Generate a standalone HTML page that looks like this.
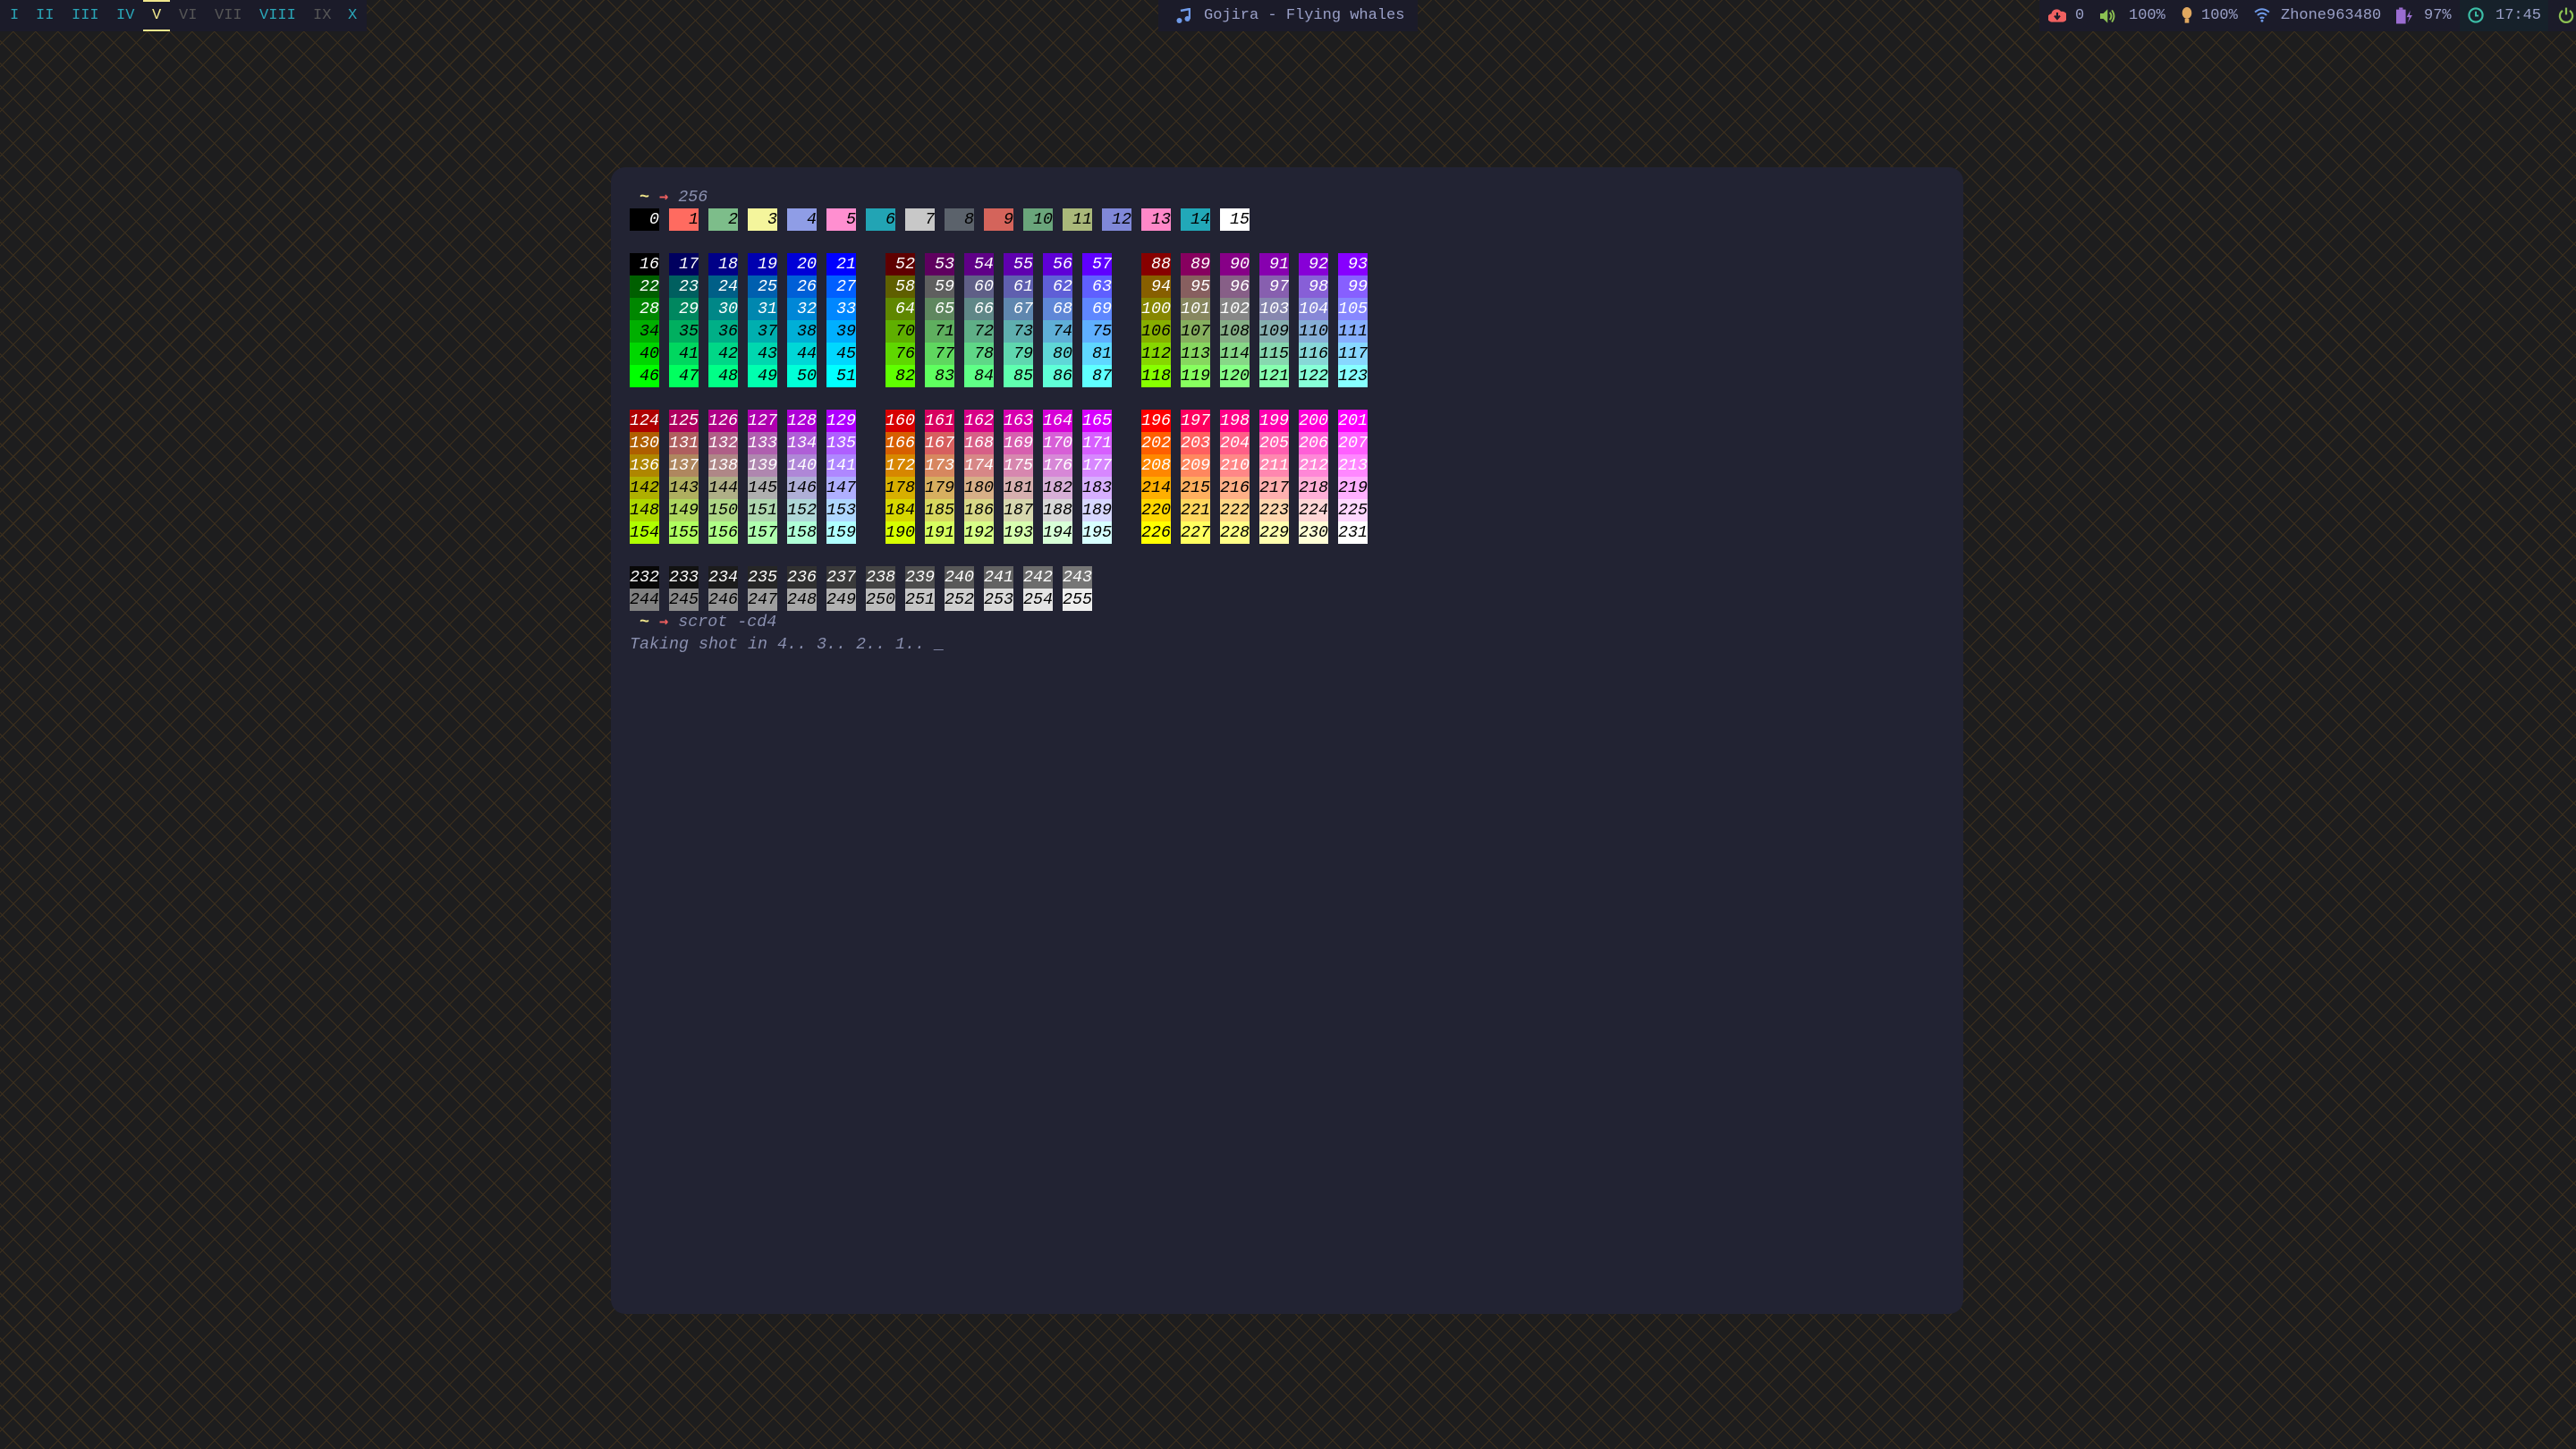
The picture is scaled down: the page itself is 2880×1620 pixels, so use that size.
<!DOCTYPE html>
<html><head><meta charset="utf-8"><style>
html,body{margin:0;padding:0}
body{width:2880px;height:1620px;overflow:hidden;position:relative;background-color:#1d1d1e;
background-image:repeating-linear-gradient(45deg,transparent 0 16.6px,#3b2f1d 16.6px 17.68px),repeating-linear-gradient(-45deg,transparent 0 16.6px,#3b2f1d 16.6px 17.68px);}
.bar{position:absolute;top:0;height:35px;background:#1b1b29;font-family:"Liberation Mono",monospace;font-size:17px;line-height:35px;color:#9aa0c8}
.bar span{position:absolute;top:0;white-space:pre}
.t{color:#2aa6b8}.d{color:#565656}
.win{position:absolute;left:683px;top:187px;width:1512px;height:1282px;background:#222333;border-radius:16px}
.term{position:absolute;left:704px;top:208px;font-family:"Liberation Mono",monospace;font-size:18.33px;line-height:25px;font-style:italic}
.l{display:flex;height:25px}
.p{display:block;height:25px;white-space:pre}
.l b{font-weight:normal;display:inline-block;width:33px;height:25px;text-align:right;margin-right:11px}
.l b.g{margin-left:22px}
.w b{color:#fff}.k b{color:#000}
.y{color:#f0e68c;font-weight:bold;font-style:normal}.r{color:#f06060;font-weight:bold;font-style:normal;font-family:"DejaVu Sans Mono",monospace;font-size:17px}.c{color:#8a90b0}
.ic{position:absolute;top:0}
</style></head><body>
<div class="bar" style="left:0;width:410px">
<span class="t" style="left:11px">I</span><span class="t" style="left:40px">II</span><span class="t" style="left:80px">III</span><span class="t" style="left:130px">IV</span><span style="left:170px;color:#f0e68c">V</span><span class="d" style="left:200px">VI</span><span class="d" style="left:240px">VII</span><span class="t" style="left:290px">VIII</span><span class="d" style="left:350px">IX</span><span class="t" style="left:389px">X</span>
<div style="position:absolute;left:160px;top:0;width:30px;height:2px;background:#f0e68c"></div>
<div style="position:absolute;left:160px;top:33px;width:30px;height:2px;background:#f0e68c"></div>
</div>
<div class="bar" style="left:1295px;width:290px">
<svg class="ic" style="left:20px;top:9px" width="16" height="17" viewBox="0 0 16 17"><path d="M5 3 L15 1 V12" stroke="#6f9ae8" stroke-width="2.5" fill="none"/><circle cx="3.5" cy="14" r="3" fill="#6f9ae8"/><circle cx="12.5" cy="12" r="3" fill="#6f9ae8"/></svg>
<span style="left:51px">Gojira - Flying whales</span>
</div>
<div class="bar" style="left:2280px;width:600px">
<svg class="ic" style="left:10px;top:8px" width="20" height="18" viewBox="0 0 17 15"><path d="M4 14 A4 4 0 0 1 3 6 A5 5 0 0 1 12 4 A4 4 0 0 1 14 14 Z" fill="#f06060"/><path d="M8.5 5 V10 M6 8 L8.5 11 L11 8" stroke="#1b1b29" stroke-width="1.8" fill="none"/></svg>
<span style="left:40px">0</span>
<svg class="ic" style="left:68px;top:9px" width="19" height="18" viewBox="0 0 16 15"><path d="M0 5 H3 L7 1 V14 L3 10 H0 Z" fill="#8cc152"/><path d="M9 4 Q12 7.5 9 11 M11 2 Q15 7.5 11 13" stroke="#8cc152" stroke-width="1.6" fill="none"/></svg>
<span style="left:100px">100%</span>
<svg class="ic" style="left:159px;top:8px" width="12" height="20" viewBox="0 0 10 17"><ellipse cx="5" cy="5.5" rx="4.5" ry="5.5" fill="#e0a860"/><rect x="3" y="11" width="4" height="4" fill="#e0a860"/></svg>
<span style="left:181px">100%</span>
<svg class="ic" style="left:240px;top:9px" width="18" height="16" viewBox="0 0 16 14"><path d="M1 4 Q8 -2 15 4 M3.5 7 Q8 3 12.5 7 M6 10 Q8 8.5 10 10" stroke="#6f9ae8" stroke-width="1.8" fill="none"/><circle cx="8" cy="12.5" r="1.3" fill="#6f9ae8"/></svg>
<span style="left:270px">Zhone963480</span>
<svg class="ic" style="left:399px;top:8px" width="18" height="19" viewBox="0 0 17 17"><rect x="3" y="0" width="4" height="2" fill="#9b6dd1"/><rect x="0" y="2" width="10" height="15" fill="#9b6dd1"/><path d="M15 3 L11 10 H14 L12 16 L17 8 H14 Z" fill="#9b6dd1"/></svg>
<span style="left:430px">97%</span>
<div style="position:absolute;left:470px;top:0;width:99px;height:35px;background:#16212a"></div>
<svg class="ic" style="left:479px;top:8px" width="18" height="18" viewBox="0 0 15 15"><circle cx="7.5" cy="7.5" r="6.3" stroke="#3cc0a8" stroke-width="1.8" fill="none"/><path d="M7.5 4 V8 H10" stroke="#3cc0a8" stroke-width="1.6" fill="none"/></svg>
<span style="left:510px">17:45</span>
<svg class="ic" style="left:580px;top:7px" width="18" height="20" viewBox="0 0 16 17"><path d="M4.5 4 A6.3 6.3 0 1 0 11.5 4" stroke="#8cc152" stroke-width="2" fill="none"/><path d="M8 1 V8" stroke="#8cc152" stroke-width="2"/></svg>
</div>
<div class="win"></div>
<div class="term">
<div class="p"> <span class="y">~</span> <span class="r">→</span> <span class="c">256</span></div>
<div class="l"><b style="background:#000;color:#fff">0</b><b style="background:#ff6b60">1</b><b style="background:#7dbd8a">2</b><b style="background:#f4f59c">3</b><b style="background:#8f9de6">4</b><b style="background:#ff8fd0">5</b><b style="background:#22a4b4">6</b><b style="background:#c8c8c8">7</b><b style="background:#5b626b">8</b><b style="background:#d4645b">9</b><b style="background:#6aa57b">10</b><b style="background:#aab87a">11</b><b style="background:#8088d8">12</b><b style="background:#ff88c8">13</b><b style="background:#22a8b8">14</b><b style="background:#fff">15</b></div>
<div class="l"></div>
<div class="l w"><b style="background:#000000">16</b><b style="background:#00005f">17</b><b style="background:#000087">18</b><b style="background:#0000af">19</b><b style="background:#0000d7">20</b><b style="background:#0000ff">21</b><b class="g" style="background:#5f0000">52</b><b style="background:#5f005f">53</b><b style="background:#5f0087">54</b><b style="background:#5f00af">55</b><b style="background:#5f00d7">56</b><b style="background:#5f00ff">57</b><b class="g" style="background:#870000">88</b><b style="background:#87005f">89</b><b style="background:#870087">90</b><b style="background:#8700af">91</b><b style="background:#8700d7">92</b><b style="background:#8700ff">93</b></div>
<div class="l w"><b style="background:#005f00">22</b><b style="background:#005f5f">23</b><b style="background:#005f87">24</b><b style="background:#005faf">25</b><b style="background:#005fd7">26</b><b style="background:#005fff">27</b><b class="g" style="background:#5f5f00">58</b><b style="background:#5f5f5f">59</b><b style="background:#5f5f87">60</b><b style="background:#5f5faf">61</b><b style="background:#5f5fd7">62</b><b style="background:#5f5fff">63</b><b class="g" style="background:#875f00">94</b><b style="background:#875f5f">95</b><b style="background:#875f87">96</b><b style="background:#875faf">97</b><b style="background:#875fd7">98</b><b style="background:#875fff">99</b></div>
<div class="l w"><b style="background:#008700">28</b><b style="background:#00875f">29</b><b style="background:#008787">30</b><b style="background:#0087af">31</b><b style="background:#0087d7">32</b><b style="background:#0087ff">33</b><b class="g" style="background:#5f8700">64</b><b style="background:#5f875f">65</b><b style="background:#5f8787">66</b><b style="background:#5f87af">67</b><b style="background:#5f87d7">68</b><b style="background:#5f87ff">69</b><b class="g" style="background:#878700">100</b><b style="background:#87875f">101</b><b style="background:#878787">102</b><b style="background:#8787af">103</b><b style="background:#8787d7">104</b><b style="background:#8787ff">105</b></div>
<div class="l k"><b style="background:#00af00">34</b><b style="background:#00af5f">35</b><b style="background:#00af87">36</b><b style="background:#00afaf">37</b><b style="background:#00afd7">38</b><b style="background:#00afff">39</b><b class="g" style="background:#5faf00">70</b><b style="background:#5faf5f">71</b><b style="background:#5faf87">72</b><b style="background:#5fafaf">73</b><b style="background:#5fafd7">74</b><b style="background:#5fafff">75</b><b class="g" style="background:#87af00">106</b><b style="background:#87af5f">107</b><b style="background:#87af87">108</b><b style="background:#87afaf">109</b><b style="background:#87afd7">110</b><b style="background:#87afff">111</b></div>
<div class="l k"><b style="background:#00d700">40</b><b style="background:#00d75f">41</b><b style="background:#00d787">42</b><b style="background:#00d7af">43</b><b style="background:#00d7d7">44</b><b style="background:#00d7ff">45</b><b class="g" style="background:#5fd700">76</b><b style="background:#5fd75f">77</b><b style="background:#5fd787">78</b><b style="background:#5fd7af">79</b><b style="background:#5fd7d7">80</b><b style="background:#5fd7ff">81</b><b class="g" style="background:#87d700">112</b><b style="background:#87d75f">113</b><b style="background:#87d787">114</b><b style="background:#87d7af">115</b><b style="background:#87d7d7">116</b><b style="background:#87d7ff">117</b></div>
<div class="l k"><b style="background:#00ff00">46</b><b style="background:#00ff5f">47</b><b style="background:#00ff87">48</b><b style="background:#00ffaf">49</b><b style="background:#00ffd7">50</b><b style="background:#00ffff">51</b><b class="g" style="background:#5fff00">82</b><b style="background:#5fff5f">83</b><b style="background:#5fff87">84</b><b style="background:#5fffaf">85</b><b style="background:#5fffd7">86</b><b style="background:#5fffff">87</b><b class="g" style="background:#87ff00">118</b><b style="background:#87ff5f">119</b><b style="background:#87ff87">120</b><b style="background:#87ffaf">121</b><b style="background:#87ffd7">122</b><b style="background:#87ffff">123</b></div>
<div class="l"></div>
<div class="l w"><b style="background:#af0000">124</b><b style="background:#af005f">125</b><b style="background:#af0087">126</b><b style="background:#af00af">127</b><b style="background:#af00d7">128</b><b style="background:#af00ff">129</b><b class="g" style="background:#d70000">160</b><b style="background:#d7005f">161</b><b style="background:#d70087">162</b><b style="background:#d700af">163</b><b style="background:#d700d7">164</b><b style="background:#d700ff">165</b><b class="g" style="background:#ff0000">196</b><b style="background:#ff005f">197</b><b style="background:#ff0087">198</b><b style="background:#ff00af">199</b><b style="background:#ff00d7">200</b><b style="background:#ff00ff">201</b></div>
<div class="l w"><b style="background:#af5f00">130</b><b style="background:#af5f5f">131</b><b style="background:#af5f87">132</b><b style="background:#af5faf">133</b><b style="background:#af5fd7">134</b><b style="background:#af5fff">135</b><b class="g" style="background:#d75f00">166</b><b style="background:#d75f5f">167</b><b style="background:#d75f87">168</b><b style="background:#d75faf">169</b><b style="background:#d75fd7">170</b><b style="background:#d75fff">171</b><b class="g" style="background:#ff5f00">202</b><b style="background:#ff5f5f">203</b><b style="background:#ff5f87">204</b><b style="background:#ff5faf">205</b><b style="background:#ff5fd7">206</b><b style="background:#ff5fff">207</b></div>
<div class="l w"><b style="background:#af8700">136</b><b style="background:#af875f">137</b><b style="background:#af8787">138</b><b style="background:#af87af">139</b><b style="background:#af87d7">140</b><b style="background:#af87ff">141</b><b class="g" style="background:#d78700">172</b><b style="background:#d7875f">173</b><b style="background:#d78787">174</b><b style="background:#d787af">175</b><b style="background:#d787d7">176</b><b style="background:#d787ff">177</b><b class="g" style="background:#ff8700">208</b><b style="background:#ff875f">209</b><b style="background:#ff8787">210</b><b style="background:#ff87af">211</b><b style="background:#ff87d7">212</b><b style="background:#ff87ff">213</b></div>
<div class="l k"><b style="background:#afaf00">142</b><b style="background:#afaf5f">143</b><b style="background:#afaf87">144</b><b style="background:#afafaf">145</b><b style="background:#afafd7">146</b><b style="background:#afafff">147</b><b class="g" style="background:#d7af00">178</b><b style="background:#d7af5f">179</b><b style="background:#d7af87">180</b><b style="background:#d7afaf">181</b><b style="background:#d7afd7">182</b><b style="background:#d7afff">183</b><b class="g" style="background:#ffaf00">214</b><b style="background:#ffaf5f">215</b><b style="background:#ffaf87">216</b><b style="background:#ffafaf">217</b><b style="background:#ffafd7">218</b><b style="background:#ffafff">219</b></div>
<div class="l k"><b style="background:#afd700">148</b><b style="background:#afd75f">149</b><b style="background:#afd787">150</b><b style="background:#afd7af">151</b><b style="background:#afd7d7">152</b><b style="background:#afd7ff">153</b><b class="g" style="background:#d7d700">184</b><b style="background:#d7d75f">185</b><b style="background:#d7d787">186</b><b style="background:#d7d7af">187</b><b style="background:#d7d7d7">188</b><b style="background:#d7d7ff">189</b><b class="g" style="background:#ffd700">220</b><b style="background:#ffd75f">221</b><b style="background:#ffd787">222</b><b style="background:#ffd7af">223</b><b style="background:#ffd7d7">224</b><b style="background:#ffd7ff">225</b></div>
<div class="l k"><b style="background:#afff00">154</b><b style="background:#afff5f">155</b><b style="background:#afff87">156</b><b style="background:#afffaf">157</b><b style="background:#afffd7">158</b><b style="background:#afffff">159</b><b class="g" style="background:#d7ff00">190</b><b style="background:#d7ff5f">191</b><b style="background:#d7ff87">192</b><b style="background:#d7ffaf">193</b><b style="background:#d7ffd7">194</b><b style="background:#d7ffff">195</b><b class="g" style="background:#ffff00">226</b><b style="background:#ffff5f">227</b><b style="background:#ffff87">228</b><b style="background:#ffffaf">229</b><b style="background:#ffffd7">230</b><b style="background:#ffffff">231</b></div>
<div class="l"></div>
<div class="l w"><b style="background:#080808">232</b><b style="background:#121212">233</b><b style="background:#1c1c1c">234</b><b style="background:#262626">235</b><b style="background:#303030">236</b><b style="background:#3a3a3a">237</b><b style="background:#444444">238</b><b style="background:#4e4e4e">239</b><b style="background:#585858">240</b><b style="background:#626262">241</b><b style="background:#6c6c6c">242</b><b style="background:#767676">243</b></div>
<div class="l k"><b style="background:#808080">244</b><b style="background:#8a8a8a">245</b><b style="background:#949494">246</b><b style="background:#9e9e9e">247</b><b style="background:#a8a8a8">248</b><b style="background:#b2b2b2">249</b><b style="background:#bcbcbc">250</b><b style="background:#c6c6c6">251</b><b style="background:#d0d0d0">252</b><b style="background:#dadada">253</b><b style="background:#e4e4e4">254</b><b style="background:#eeeeee">255</b></div>
<div class="p"> <span class="y">~</span> <span class="r">→</span> <span class="c">scrot -cd4</span></div>
<div class="p"><span class="c">Taking shot in 4.. 3.. 2.. 1.. _</span></div>
</div>
</body></html>
